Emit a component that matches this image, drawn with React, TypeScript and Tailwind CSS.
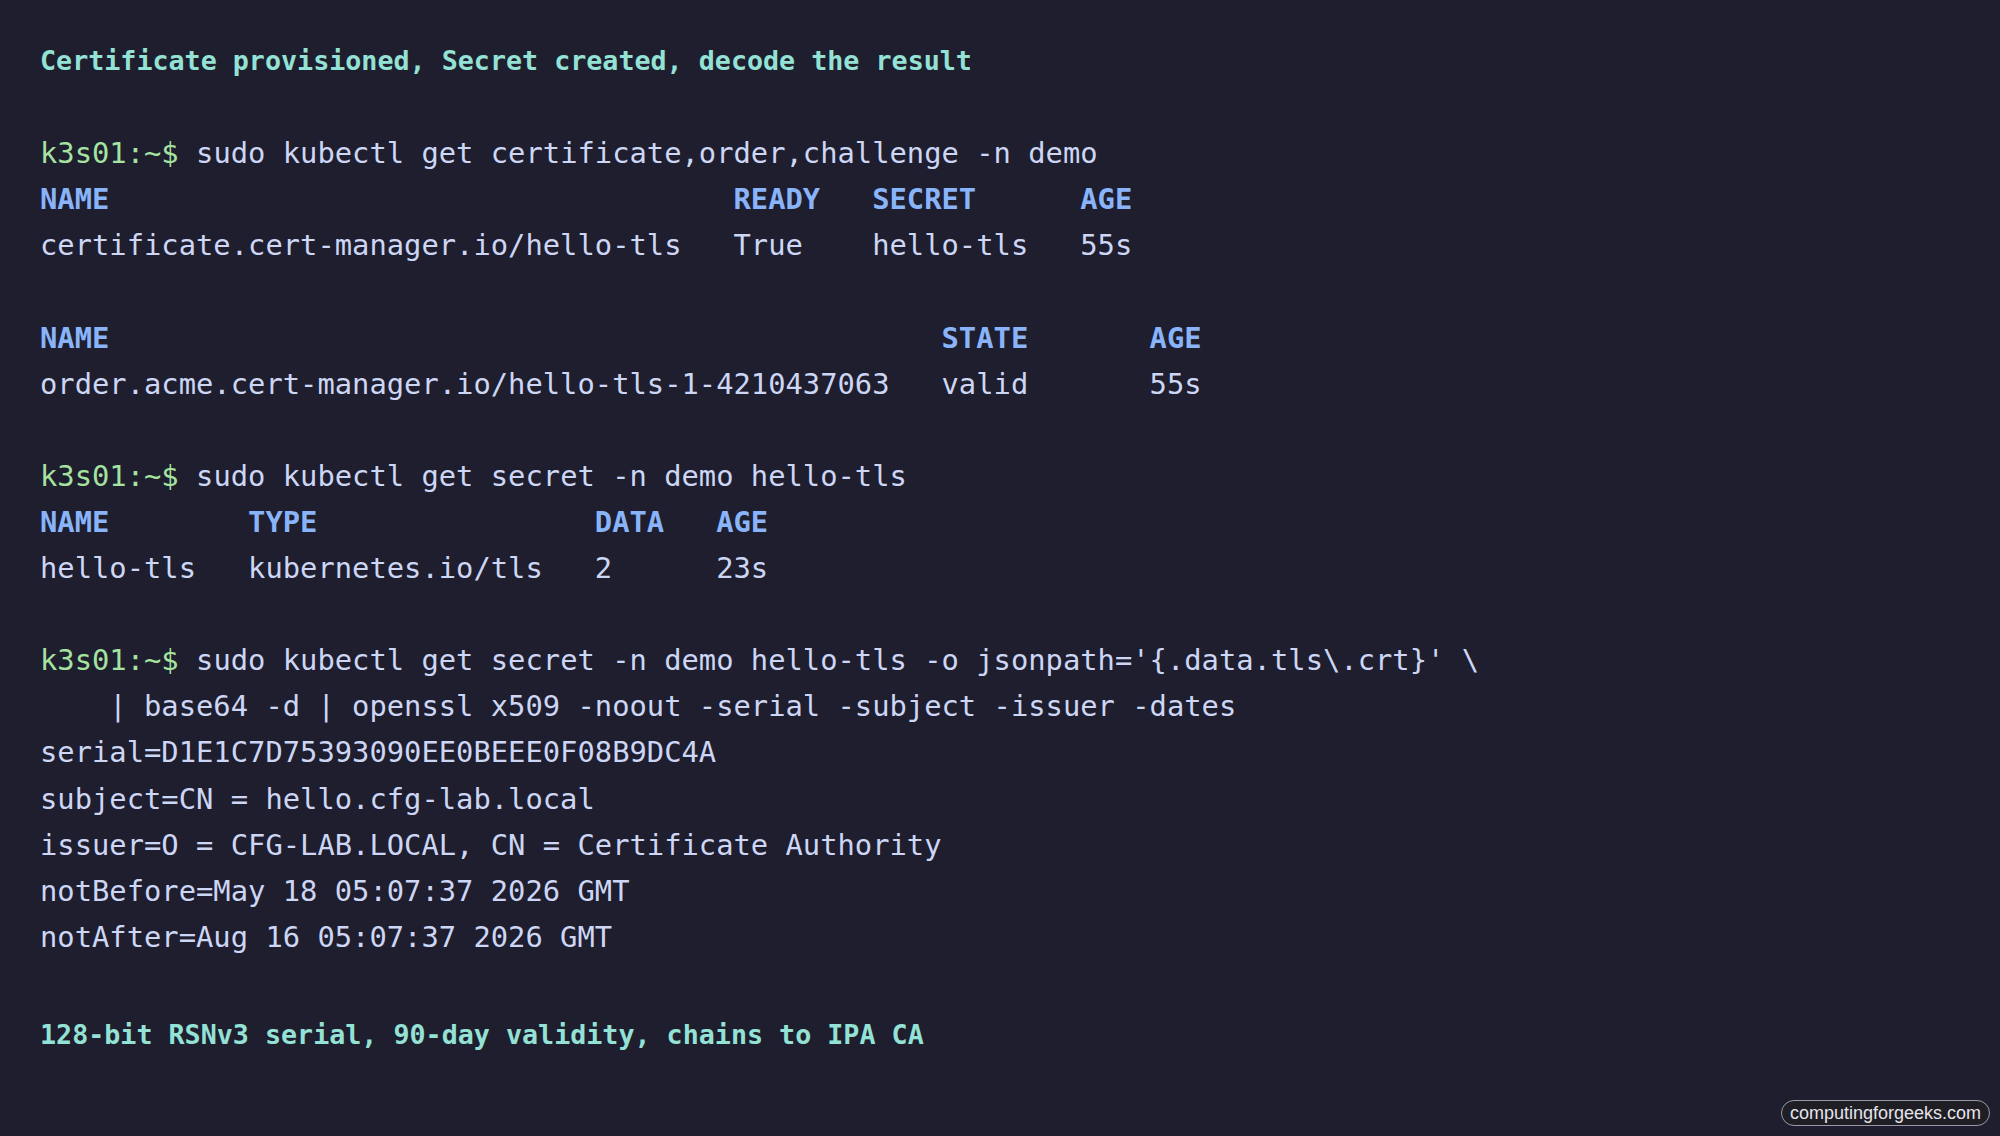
import React from "react";

const prompt = "k3s01:~$";

function Cmd({ text }: { text: string }) {
    return (
        <div>
            <span className="text-[#a6e3a1]">{prompt}</span> {text}
        </div>
    );
}

function Head({ text }: { text: string }) {
    return <div className="font-bold text-[#89b4fa]">{text}</div>;
}

function Note({ text, className = "" }: { text: string; className?: string }) {
    return <div className={"font-bold text-[26.7px] text-[#94e2d5] " + className}>{text}</div>;
}

function Blank() {
    return <div>&nbsp;</div>;
}

export default function App() {
    return (
        <div className="relative w-[2000px] h-[1136px] overflow-hidden bg-[#1e1e2e]">
            <pre className="pl-[40px] pt-[38px] text-[28.8px] leading-[46.1px] text-[#cdd6f4] font-['DejaVu_Sans_Mono','Liberation_Mono',monospace] whitespace-pre">
                <Note text="Certificate provisioned, Secret created, decode the result" />
                <Blank />
                <Cmd text="sudo kubectl get certificate,order,challenge -n demo" />
                <Head text="NAME                                    READY   SECRET      AGE" />
                <div>certificate.cert-manager.io/hello-tls   True    hello-tls   55s</div>
                <Blank />
                <Head text="NAME                                                STATE       AGE" />
                <div>order.acme.cert-manager.io/hello-tls-1-4210437063   valid       55s</div>
                <Blank />
                <Cmd text="sudo kubectl get secret -n demo hello-tls" />
                <Head text="NAME        TYPE                DATA   AGE" />
                <div>hello-tls   kubernetes.io/tls   2      23s</div>
                <Blank />
                <Cmd text="sudo kubectl get secret -n demo hello-tls -o jsonpath='{.data.tls\.crt}' \" />
                <div>    | base64 -d | openssl x509 -noout -serial -subject -issuer -dates</div>
                <div>serial=D1E1C7D75393090EE0BEEE0F08B9DC4A</div>
                <div>subject=CN = hello.cfg-lab.local</div>
                <div>issuer=O = CFG-LAB.LOCAL, CN = Certificate Authority</div>
                <div>notBefore=May 18 05:07:37 2026 GMT</div>
                <div>notAfter=Aug 16 05:07:37 2026 GMT</div>
                <Blank />
                <Note className="mt-[6px]" text="128-bit RSNv3 serial, 90-day validity, chains to IPA CA" />
            </pre>

            {/* watermark badge */}
            <div className="absolute right-[10px] bottom-[10px] rounded-full border border-[#9a9aa6] bg-[#1e1e24] px-[8px] py-[1px] text-[18px] leading-[22px] text-[#e4e4ea] font-['Liberation_Sans',Arial,sans-serif]">
                computingforgeeks.com
            </div>
        </div>
    );
}
